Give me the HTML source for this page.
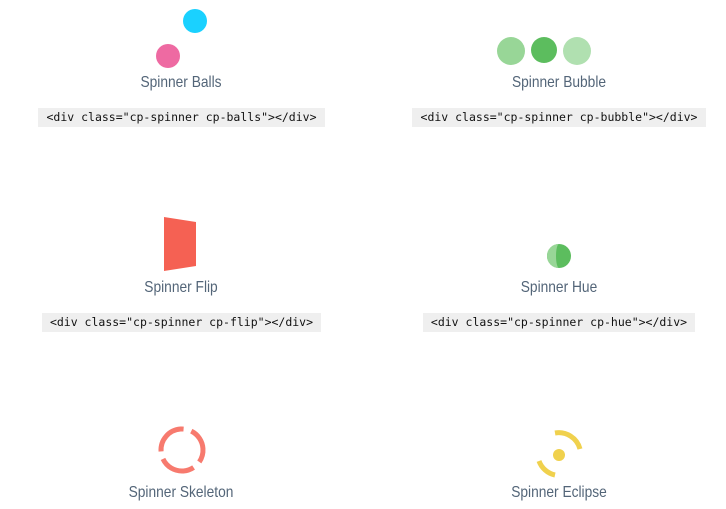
<!DOCTYPE html>
<html><head><meta charset="utf-8"><style>
html,body{margin:0;padding:0;background:#fff;width:726px;height:509px;overflow:hidden;position:relative}
.l{position:absolute;width:300px;text-align:center;font:16px "Liberation Sans Narrow","Liberation Sans",sans-serif;color:#536578;transform:scaleX(0.86)}
.c{position:absolute;height:19px;background:#efefef;font:11.5px "DejaVu Sans Mono","Liberation Mono",monospace;line-height:19px;color:#111;text-align:center}
.a{position:absolute;border-radius:50%}
</style></head><body>
<div class="a" style="left:183px;top:9px;width:24px;height:24px;background:#1ad1ff"></div>
<div class="a" style="left:156px;top:44px;width:24px;height:24px;background:#ee6aa2"></div>
<div class="l" style="left:31px;top:74px">Spinner Balls</div>
<div class="c" style="left:38px;top:108px;width:287px">&lt;div class="cp-spinner cp-balls"&gt;&lt;/div&gt;</div>

<div class="a" style="left:497px;top:37px;width:28px;height:28px;background:#98d697"></div>
<div class="a" style="left:531px;top:37px;width:26px;height:26px;background:#5cbd5e"></div>
<div class="a" style="left:563px;top:37px;width:28px;height:28px;background:#b0e0b0"></div>
<div class="l" style="left:409px;top:74px">Spinner Bubble</div>
<div class="c" style="left:412px;top:108px;width:294px">&lt;div class="cp-spinner cp-bubble"&gt;&lt;/div&gt;</div>

<svg style="position:absolute;left:0;top:0" width="726" height="509">
<polygon points="164,217 196,222 196,266 164,271" fill="#f56153"/>
<circle cx="559" cy="256" r="12" fill="#5cbd5e"/>
<path d="M559,244 A12,12 0 0 0 559,268 A3,12 0 0 1 559,244Z" fill="#98d697"/>
<circle cx="182" cy="450" r="21" fill="none" stroke="#f77a6e" stroke-width="5" stroke-dasharray="36 8" transform="rotate(-184 182 450)"/>
<path d="M555,433 A22,22 0 0 1 580,449" fill="none" stroke="#f0d14d" stroke-width="5"/>
<path d="M539,461 A22,22 0 0 0 555,475" fill="none" stroke="#f0d14d" stroke-width="5"/>
<circle cx="559" cy="455" r="6" fill="#f0d14d"/>
</svg>
<div class="l" style="left:31px;top:279px">Spinner Flip</div>
<div class="c" style="left:42px;top:313px;width:279px">&lt;div class="cp-spinner cp-flip"&gt;&lt;/div&gt;</div>
<div class="l" style="left:409px;top:279px">Spinner Hue</div>
<div class="c" style="left:423px;top:313px;width:272px">&lt;div class="cp-spinner cp-hue"&gt;&lt;/div&gt;</div>
<div class="l" style="left:31px;top:484px">Spinner Skeleton</div>
<div class="l" style="left:409px;top:484px">Spinner Eclipse</div>
</body></html>
